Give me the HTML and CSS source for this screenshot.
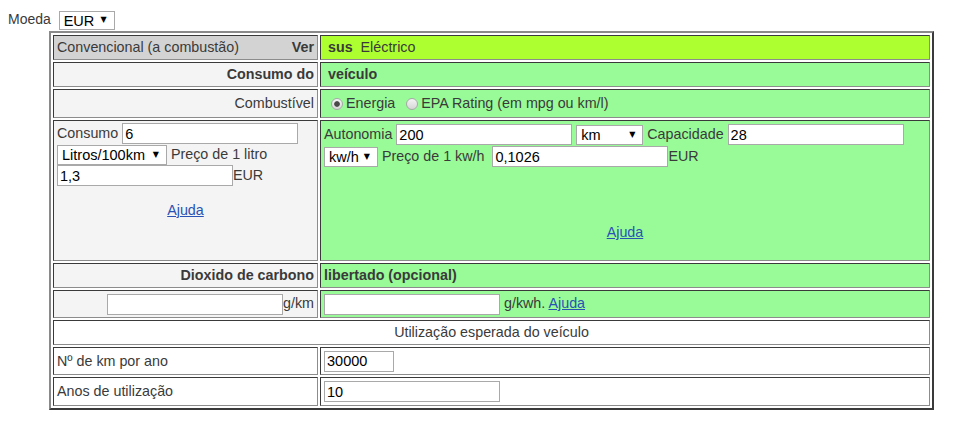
FILE: index.html
```html
<html>
  <head>
    <link rel="stylesheet" href="styles.css">
  </head>
  <body>
    <div class="currency-bar">
      Moeda
      <span class="select-box select-currency"><select><option>EUR</option></select></span>
    </div>
    <table class="calc-table">
      <colgroup>
        <col class="col-left">
        <col class="col-right">
      </colgroup>
      <tr class="row-head">
        <td class="cell-conv-title">
          <div class="split"><span>Convencional (a combustão)</span><b>Ver</b></div>
        </td>
        <td class="cell-elec-title indent"><b>sus</b>&nbsp; Eléctrico</td>
      </tr>
      <tr class="row-head">
        <td class="cell-conv right"><b>Consumo do</b></td>
        <td class="cell-elec indent"><b>veículo</b></td>
      </tr>
      <tr class="row-radio">
        <td class="cell-conv right">Combustível</td>
        <td class="cell-elec">
          <label><input type="radio" name="fuel" checked>Energia</label>
          <label><input type="radio" name="fuel">EPA Rating (em mpg ou km/l)</label>
        </td>
      </tr>
      <tr class="row-consumption">
        <td class="cell-conv top">
          <div class="line">Consumo <input type="text" class="field" value="6"></div>
          <div class="line"><span class="select-box select-unit"><select><option>Litros/100km</option></select></span> Preço de 1 litro</div>
          <div class="line"><input type="text" class="field" value="1,3">EUR</div>
          <div class="help help-left"><a href="#">Ajuda</a></div>
        </td>
        <td class="cell-elec top">
          <div class="line line-wide">Autonomia <input type="text" class="field" value="200"> <span class="select-box select-km"><select><option>km</option></select></span> Capacidade <input type="text" class="field" value="28"></div>
          <div class="line line-wide"><span class="select-box select-kwh"><select><option>kw/h</option></select></span> Preço de 1 kw/h&nbsp; <input type="text" class="field" value="0,1026">EUR</div>
          <div class="help help-right"><a href="#">Ajuda</a></div>
        </td>
      </tr>
      <tr class="row-head">
        <td class="cell-conv right"><b>Dioxido de carbono</b></td>
        <td class="cell-elec"><b>libertado (opcional)</b></td>
      </tr>
      <tr class="row-input">
        <td class="cell-conv right"><input type="text" class="field">g/km</td>
        <td class="cell-elec"><input type="text" class="field"> g/kwh. <a href="#">Ajuda</a></td>
      </tr>
      <tr class="row-head">
        <td class="cell-plain center" colspan="2">Utilização esperada do veículo</td>
      </tr>
      <tr class="row-input">
        <td class="cell-plain">Nº de km por ano</td>
        <td class="cell-plain"><input type="text" class="field field-short" value="30000"></td>
      </tr>
      <tr class="row-last">
        <td class="cell-plain">Anos de utilização</td>
        <td class="cell-plain"><input type="text" class="field" value="10"></td>
      </tr>
    </table>
  </body>
</html>
```

FILE: styles.css
```css
body {
  margin: 8px;
  font-family: "Liberation Sans", Arial, sans-serif;
  font-size: 14px;
  color: #3a3a3a;
}
a {
  color: #2a52b4;
}
.currency-bar {
  height: 23px;
  line-height: 22px;
}
/* Selects drawn flat, with a small black arrow */
.select-box {
  display: inline-block;
  position: relative;
  vertical-align: middle;
}
.select-box select {
  appearance: none;
  -webkit-appearance: none;
  display: block;
  box-sizing: border-box;
  height: 20px;
  margin: 0;
  padding: 0 14px 0 4px;
  border: 1px solid #a9a9a9;
  border-radius: 0;
  background: #fff;
  color: #000;
  font-family: "Liberation Sans", Arial, sans-serif;
  font-size: 14.5px;
  line-height: 18px;
}
.select-box::after {
  content: "▼";
  position: absolute;
  right: 8px;
  top: 50%;
  transform: translateY(-50%);
  font-family: "DejaVu Sans", sans-serif;
  font-size: 8px;
  line-height: 8px;
  color: #000;
  pointer-events: none;
}
.select-currency {
  margin-left: 4px;
}
.select-currency select {
  width: 56px;
  height: 19px;
}
.select-unit select {
  width: 110px;
}
.select-km select {
  width: 67px;
}
.select-kwh select {
  width: 54px;
}
.field {
  box-sizing: border-box;
  width: 176px;
  height: 21px;
  margin: 0;
  padding: 0 2px;
  border: 1px solid #a9a9a9;
  background: #fff;
  color: #000;
  font-family: "Liberation Sans", Arial, sans-serif;
  font-size: 14.5px;
  vertical-align: middle;
}
.field-short {
  width: 70px;
}
input[type="radio"] {
  appearance: none;
  -webkit-appearance: none;
  width: 12px;
  height: 12px;
  margin: 0 3px 0 7px;
  border: 1px solid #a8a8a8;
  border-radius: 50%;
  background: linear-gradient(#f4f4f4, #d6d6d6);
  vertical-align: -2px;
}
input[type="radio"]:checked {
  background: radial-gradient(circle, #4a4a4a 0 2.4px, transparent 3.2px), linear-gradient(#f4f4f4, #d6d6d6);
}
/* Main table */
.calc-table {
  width: 885px;
  margin-left: 41px;
  table-layout: fixed;
  border-collapse: separate;
  border-spacing: 2px;
  border-style: solid;
  border-width: 2px;
  border-color: #8a8a8a #3a3a3a #3a3a3a #8a8a8a;
  font-size: 14.3px;
  color: #3a3a3a;
}
.col-left {
  width: 265px;
}
.calc-table td {
  padding: 0 3px;
  border-style: solid;
  border-width: 1px;
  border-color: #3a3a3a #8c8c8c #8c8c8c #3a3a3a;
  vertical-align: middle;
  line-height: 17px;
  white-space: nowrap;
}
.row-head {
  height: 25px;
}
.row-radio {
  height: 29px;
}
.row-consumption {
  height: 141px;
}
.row-input {
  height: 28px;
}
.row-last {
  height: 29px;
}
.cell-conv-title {
  background: #d3d3d3;
}
.cell-elec-title {
  background: #adff2f;
}
.cell-conv {
  background: #f4f4f4;
}
.cell-elec {
  background: #98fb98;
}
.cell-plain {
  background: #fff;
}
.split {
  display: flex;
  justify-content: space-between;
}
.calc-table td.indent {
  padding-left: 7px;
}
.calc-table td.right {
  text-align: right;
}
.calc-table td.center {
  text-align: center;
}
.calc-table td.top {
  vertical-align: top;
  padding-top: 2px;
}
.line {
  height: 21px;
  line-height: 21px;
}
.line-wide {
  height: 22px;
  line-height: 22px;
}
.line .field {
  vertical-align: top;
}
.line-wide .field {
  margin-top: 1px;
}
.help {
  text-align: center;
}
.help-left {
  margin-top: 16px;
}
.help-right {
  margin-top: 57px;
}
```
